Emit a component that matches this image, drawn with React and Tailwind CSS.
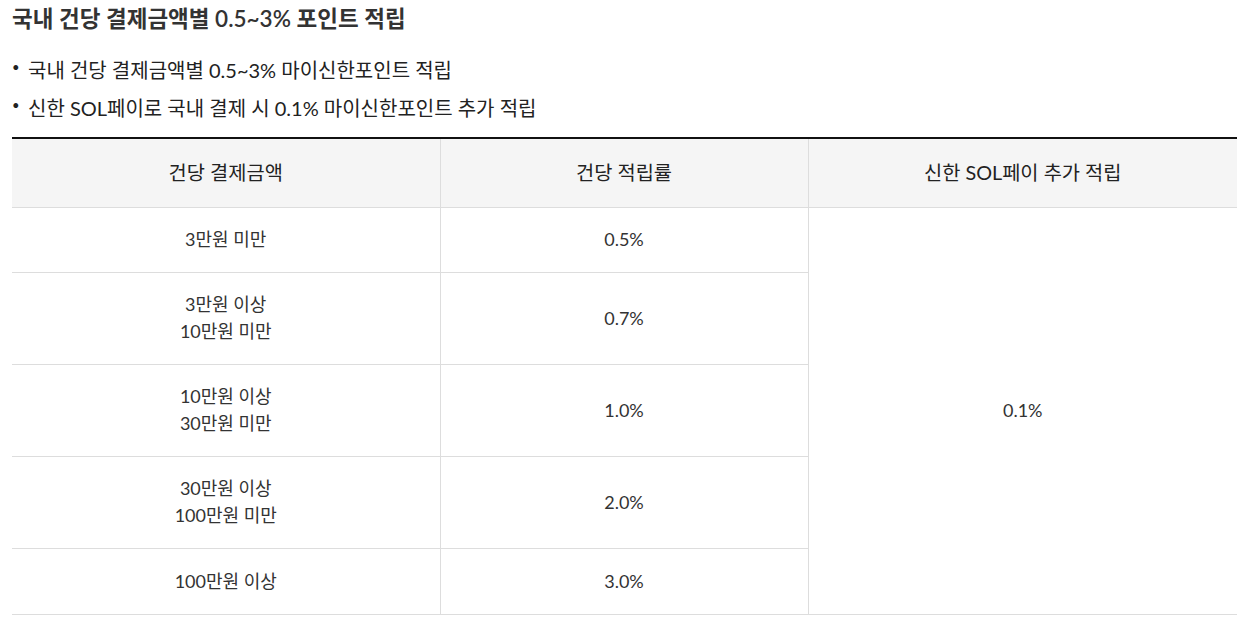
import React from 'react';

const ROWS = [
  { amount: ['3만원 미만'], rate: '0.5%', h: 'h-[65px]' },
  { amount: ['3만원 이상', '10만원 미만'], rate: '0.7%', h: 'h-[92px]' },
  { amount: ['10만원 이상', '30만원 미만'], rate: '1.0%', h: 'h-[92px]' },
  { amount: ['30만원 이상', '100만원 미만'], rate: '2.0%', h: 'h-[92px]' },
  { amount: ['100만원 이상'], rate: '3.0%', h: 'h-[66px]' },
];

export default function App() {
  return (
    <div className="bg-white text-[#222] px-3 pt-[5px] font-['Lato','Noto_Sans_CJK_KR',sans-serif]">
      <h3 className="text-[22.5px] font-semibold leading-[28px] text-[#333]">국내 건당 결제금액별 0.5~3% 포인트 적립</h3>

      <ul className="mt-[23px] space-y-[10px] text-[20px] leading-[28px]">
        <li className="flex">
          <span className="w-4 shrink-0 text-[13px] relative -top-[3px]">•</span>
          <span>국내 건당 결제금액별 0.5~3% 마이신한포인트 적립</span>
        </li>
        <li className="flex">
          <span className="w-4 shrink-0 text-[13px] relative -top-[3px]">•</span>
          <span>신한 SOL페이로 국내 결제 시 0.1% 마이신한포인트 추가 적립</span>
        </li>
      </ul>

      <table className="mt-[15px] w-[1225px] border-collapse border-t-2 border-t-[#111] text-center table-fixed">
        <colgroup>
          <col className="w-[428px]" />
          <col className="w-[368px]" />
          <col />
        </colgroup>
        <thead>
          <tr className="h-[69px] bg-[#f5f5f5] text-[19.8px] text-[#222]">
            <th className="font-normal border-b border-[#ddd] border-r">건당 결제금액</th>
            <th className="font-normal border-b border-[#ddd] border-r">건당 적립률</th>
            <th className="font-normal border-b border-[#ddd]">신한 SOL페이 추가 적립</th>
          </tr>
        </thead>
        <tbody className="text-[18px] leading-[27px] text-[#333]">
          {ROWS.map((r, i) => (
            <tr key={i} className={r.h}>
              <td className="border-b border-r border-[#ddd]">
                {r.amount.map((a) => (
                  <div key={a}>{a}</div>
                ))}
              </td>
              <td className="border-b border-r border-[#ddd]">{r.rate}</td>
              {i === 0 && (
                <td rowSpan={5} className="border-b border-[#ddd]">0.1%</td>
              )}
            </tr>
          ))}
        </tbody>
      </table>
    </div>
  );
}
